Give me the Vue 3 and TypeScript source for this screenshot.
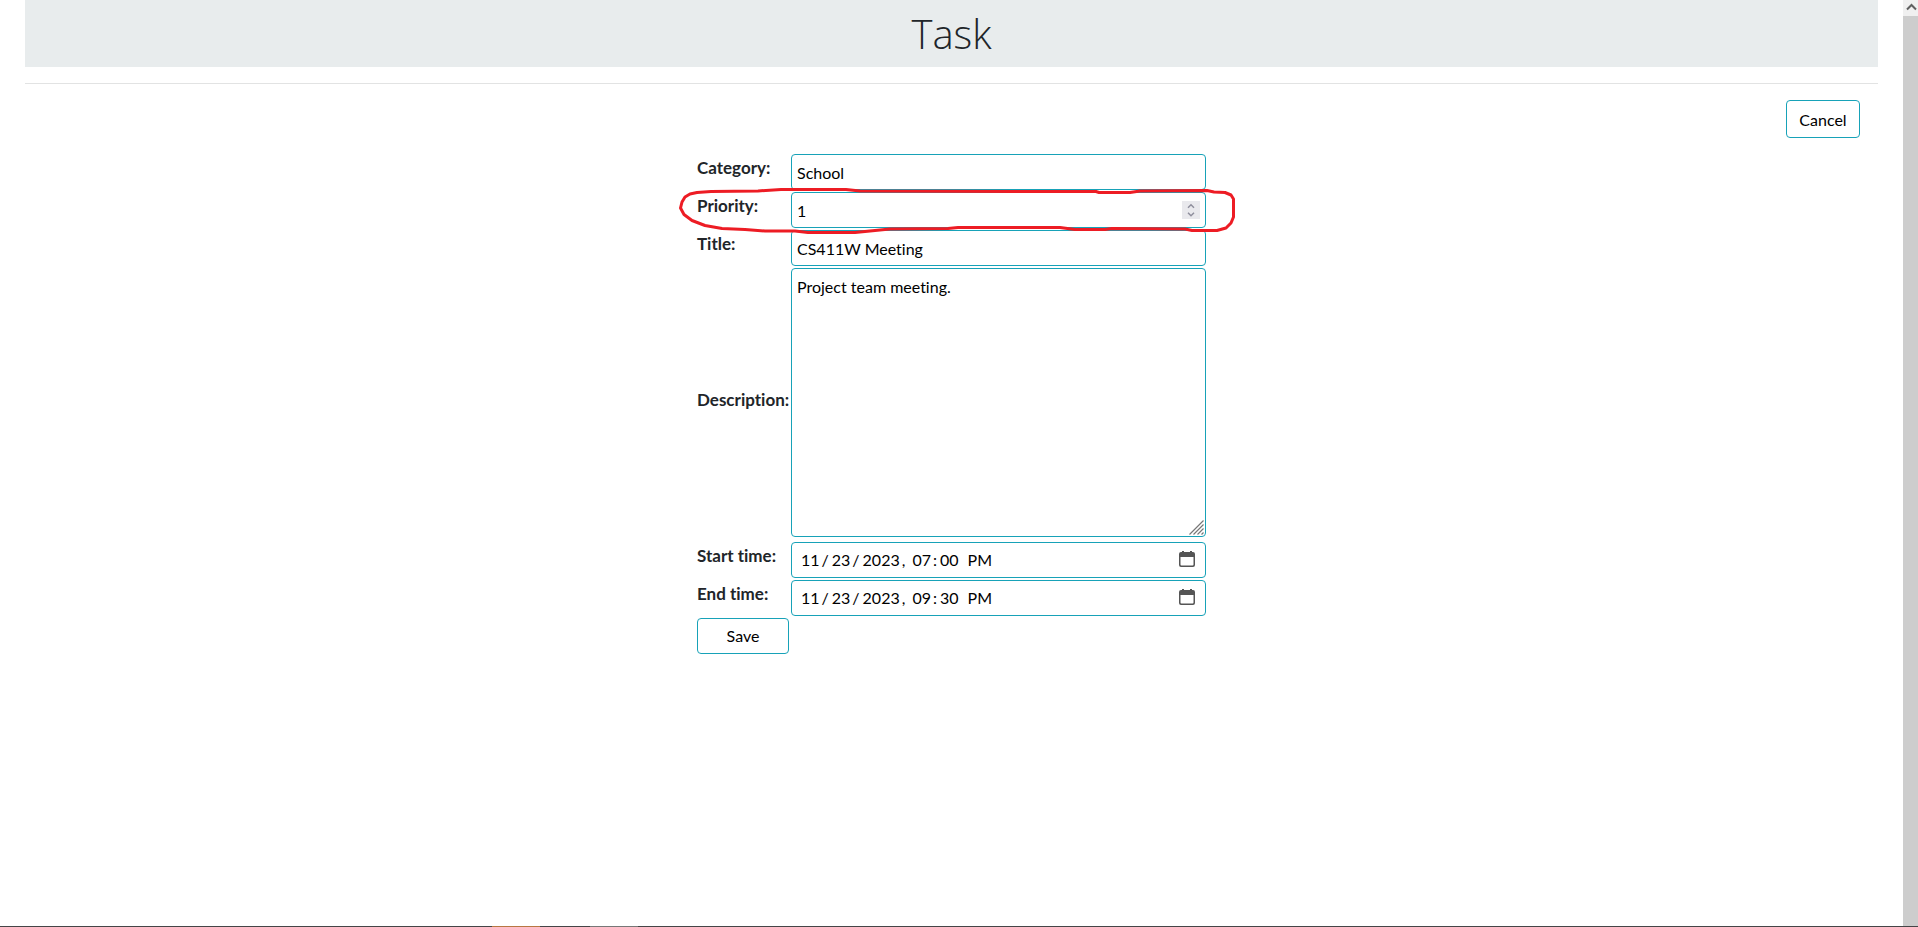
<script setup lang="ts">
import { ref } from 'vue'

const category = ref('School')
const priority = ref(1)
const title = ref('CS411W Meeting')
const description = ref('Project team meeting.')
const startTime = ref('2023-11-23T19:00')
const endTime = ref('2023-11-23T21:30')
</script>

<template>
  <div class="window">
    <div class="viewport">
      <main class="page">
        <header class="banner"><h1>Task</h1></header>
        <hr />
        <div class="actions">
          <button type="button" class="btn cancel">Cancel</button>
        </div>
        <form class="task-form" @submit.prevent>
          <label for="category">Category:</label>
          <div class="field"><input id="category" v-model="category" type="text" /></div>

          <label for="priority">Priority:</label>
          <div class="field">
            <input id="priority" v-model.number="priority" type="number" />
            <svg class="spinner" viewBox="0 0 18 18" aria-hidden="true">
              <rect width="18" height="18" fill="#e9e9ed" />
              <path d="M6 6.7 9 3.8l3 2.9M6 11.8l3 2.9 3-2.9" fill="none" stroke="#8f8f9d" stroke-width="1.5" />
            </svg>
            <svg class="marker" viewBox="676 184 564 54" aria-hidden="true">
              <path d="M680.5 208 682 202 685 197 690 194 697 192.500 711 191.500 758 191 781 189.500 846 189.500 860 191 1017 191.500 1096 191.500 1099 192.500 1130 192.500 1140 191 1207 190.500 1214 192 1225 192.500 1231 195 1233.500 199 1233.500 217 1231 223 1226 228 1217 230.500 1192 230.500 1185 229 1112 228.500 1105 229.500 1075 229.500 1060 227.500 958 227.500 948 228.500 890 229 870 231 855 232.500 808 232.500 795 231 765 231 745 229.500 722 228.500 705 225.500 692 220.500 684 214.500Z" />
            </svg>
          </div>

          <label for="title">Title:</label>
          <div class="field"><input id="title" v-model="title" type="text" /></div>

          <label for="description">Description:</label>
          <div class="field area">
            <textarea id="description" v-model="description"></textarea>
            <svg class="grip" viewBox="0 0 15 15" aria-hidden="true">
              <path d="M.5 14.500 14.500.5M4.500 14.500l10-10M8.500 14.500l6-6M12.500 14.500l2-2" fill="none" stroke="#777" stroke-width="1.200" />
            </svg>
          </div>

          <label for="start">Start time:</label>
          <div class="field">
            <input id="start" v-model="startTime" type="datetime-local" />
            <svg class="calendar" viewBox="0 0 16 16" aria-hidden="true">
              <path d="M3 0h2v1h6V0h2v1h1a2 2 0 0 1 2 2v11a2 2 0 0 1-2 2H2a2 2 0 0 1-2-2V3a2 2 0 0 1 2-2h1zM1.500 6v7.500a1 1 0 0 0 1 1h11a1 1 0 0 0 1-1V6z" fill="#555" fill-rule="evenodd" />
            </svg>
          </div>

          <label for="end">End time:</label>
          <div class="field">
            <input id="end" v-model="endTime" type="datetime-local" />
            <svg class="calendar" viewBox="0 0 16 16" aria-hidden="true">
              <path d="M3 0h2v1h6V0h2v1h1a2 2 0 0 1 2 2v11a2 2 0 0 1-2 2H2a2 2 0 0 1-2-2V3a2 2 0 0 1 2-2h1zM1.500 6v7.500a1 1 0 0 0 1 1h11a1 1 0 0 0 1-1V6z" fill="#555" fill-rule="evenodd" />
            </svg>
          </div>

          <button type="submit" class="btn">Save</button>
        </form>
      </main>
      <div class="scrollbar" aria-hidden="true">
        <div class="arrow">
          <svg viewBox="0 0 15 16"><path d="M4 9.500 8.500 5l4.500 4.500" fill="none" stroke="#606060" stroke-width="2" /></svg>
        </div>
      </div>
    </div>
    <div class="taskbar" aria-hidden="true"><span class="app active"></span><span class="app"></span></div>
  </div>
</template>

<style>
body {
  margin: 0;
  background: #fff;
}
</style>

<style scoped>
.window {
  display: flex;
  flex-direction: column;
  min-height: 100vh;
  font: 400 16px/24px Lato, sans-serif;
  color: #212529;
}
.window *,
.window {
  box-sizing: border-box;
}
.viewport {
  display: flex;
  flex: 1;
}
.page {
  flex: 1;
  min-width: 0;
  padding: 0 25px;
}
.banner {
  height: 67px;
  padding-top: 10px;
  background: #e8eced;
  text-align: center;
}
h1 {
  margin: 0;
  font: 300 40px/48px 'Open Sans', sans-serif;
}
hr {
  margin: 16px 0;
  border: 0;
  border-top: 1px solid #e2e3e3;
}
.actions {
  display: flex;
  justify-content: flex-end;
  padding-right: 18px;
  margin-bottom: 16px;
}
.btn,
input,
textarea {
  margin: 0;
  border: 1px solid #17a2b8;
  border-radius: 4px;
  background: #fff;
  color: #000;
  font: inherit;
  font-variant-ligatures: none;
}
.btn {
  height: 36px;
  padding: 0;
}
.cancel {
  width: 74px;
  height: 38px;
  padding-top: 2px;
}
.task-form {
  display: grid;
  grid-template-columns: 92px 415px;
  gap: 2px;
  justify-content: center;
}
label {
  align-self: center;
  margin-bottom: 8px;
  font-size: 17px;
  font-weight: 700;
  font-variant-ligatures: none;
  white-space: nowrap;
}
.field {
  position: relative;
  height: 36px;
}
.area {
  height: 272px;
}
input,
textarea {
  display: block;
  width: 100%;
  height: 100%;
  padding: 1px 5px 0;
  outline: 0;
}
textarea {
  height: 269px;
  padding-top: 6px;
  resize: none;
}
input[type='number'] {
  appearance: textfield;
}
input::-webkit-inner-spin-button {
  appearance: none;
  margin: 0;
}
input[type='datetime-local'] {
  padding: 0 8px;
}
input::-webkit-calendar-picker-indicator {
  opacity: 0;
}
input::-webkit-datetime-edit-text {
  padding: 0 2px 0 1px;
}
.spinner,
.calendar,
.grip,
.marker {
  position: absolute;
  pointer-events: none;
}
.spinner {
  top: 9px;
  right: 6px;
  width: 18px;
  height: 18px;
}
.calendar {
  top: 9px;
  right: 11px;
  width: 16px;
  height: 16px;
}
.grip {
  right: 2px;
  bottom: 5px;
  width: 15px;
  height: 15px;
}
.marker {
  z-index: 1;
  top: -8px;
  left: -115px;
  width: 564px;
  height: 54px;
}
.marker path {
  fill: none;
  stroke: #ed1c24;
  stroke-width: 3;
  stroke-linejoin: round;
}
.scrollbar {
  width: 15px;
  background: #cdcdcd;
}
.arrow {
  height: 16px;
  background: #f0f0f0;
}
.arrow svg {
  display: block;
  width: 15px;
  height: 16px;
}
.taskbar {
  display: flex;
  gap: 50px;
  height: 1px;
  padding-left: 492px;
  background: #454547;
}
.app {
  width: 48px;
  background: #777;
}
.active {
  background: #b77742;
}
</style>
